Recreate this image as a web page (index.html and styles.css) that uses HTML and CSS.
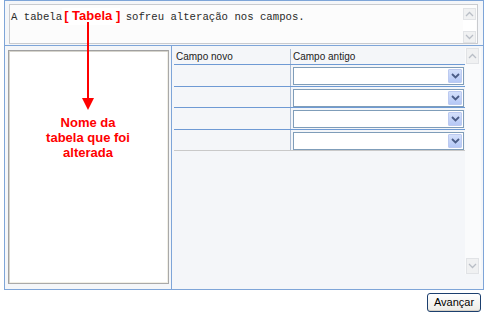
FILE: index.html
```html
<!DOCTYPE html>
<html lang="pt">
<head>
<meta charset="utf-8">
<title>Alteração de tabela</title>
<link rel="stylesheet" href="styles.css">
</head>
<body>
<div class="frame">
  <div class="top">
    <div class="textarea">
      <div class="msg">A tabela<span class="tag">[ Tabela ]</span> sofreu alteração nos campos.</div>
      <div class="tscroll">
        <div class="sbtn"><svg width="9" height="6" viewBox="0 0 9 6"><path d="M1 5 L4.5 1.5 L8 5" fill="none" stroke="#b9bec6" stroke-width="1.3"/></svg></div>
        <div class="strack"></div>
        <div class="sbtn"><svg width="9" height="6" viewBox="0 0 9 6"><path d="M1 1 L4.5 4.5 L8 1" fill="none" stroke="#b9bec6" stroke-width="1.3"/></svg></div>
      </div>
    </div>
  </div>
  <div class="main">
    <div class="left">
      <div class="listbox"></div>
    </div>
    <div class="right">
      <div class="grid">
        <div class="row head">
          <div class="c1">Campo novo</div>
          <div class="c2">Campo antigo</div>
        </div>
        <div class="row">
          <div class="c1"></div>
          <div class="c2"><div class="select"><div class="field"></div><div class="drop"><svg width="9" height="6" viewBox="0 0 9 6"><path d="M1 1 L4.5 4.5 L8 1" fill="none" stroke="#4b5d87" stroke-width="1.8"/></svg></div></div></div>
        </div>
        <div class="row">
          <div class="c1"></div>
          <div class="c2"><div class="select"><div class="field"></div><div class="drop"><svg width="9" height="6" viewBox="0 0 9 6"><path d="M1 1 L4.5 4.5 L8 1" fill="none" stroke="#4b5d87" stroke-width="1.8"/></svg></div></div></div>
        </div>
        <div class="row">
          <div class="c1"></div>
          <div class="c2"><div class="select"><div class="field"></div><div class="drop"><svg width="9" height="6" viewBox="0 0 9 6"><path d="M1 1 L4.5 4.5 L8 1" fill="none" stroke="#4b5d87" stroke-width="1.8"/></svg></div></div></div>
        </div>
        <div class="row last">
          <div class="c1"></div>
          <div class="c2"><div class="select"><div class="field"></div><div class="drop"><svg width="9" height="6" viewBox="0 0 9 6"><path d="M1 1 L4.5 4.5 L8 1" fill="none" stroke="#4b5d87" stroke-width="1.8"/></svg></div></div></div>
        </div>
      </div>
      <div class="rscroll">
        <div class="rbtn"><svg width="9" height="6" viewBox="0 0 9 6"><path d="M1 5 L4.5 1.5 L8 5" fill="none" stroke="#b9bec6" stroke-width="1.3"/></svg></div>
        <div class="rtrack"></div>
        <div class="rbtn"><svg width="9" height="6" viewBox="0 0 9 6"><path d="M1 1 L4.5 4.5 L8 1" fill="none" stroke="#b9bec6" stroke-width="1.3"/></svg></div>
      </div>
    </div>
  </div>
</div>
<div class="footer">
  <button class="btn" type="button">Avançar</button>
</div>
<div class="annot">
  <svg class="arrow" width="100" height="93" viewBox="0 0 100 93">
    <line x1="50" y1="0" x2="50" y2="78" stroke="#ff0000" stroke-width="2"/>
    <polygon points="44,76 56,76 50,88" fill="#ff0000"/>
  </svg>
  <div class="note">Nome da<br>tabela que foi<br>alterada</div>
</div>
</body>
</html>
```

FILE: styles.css
```css
html, body {
  margin: 0;
  padding: 0;
  background: #ffffff;
}
body {
  position: relative;
  width: 486px;
  height: 313px;
  overflow: hidden;
  font-family: "Liberation Sans", Arial, sans-serif;
}
.frame {
  margin-left: 4px;
  width: 478px;
  height: 288px;
  border: 1px solid #7ea5d8;
  display: flex;
  flex-direction: column;
}
.top {
  height: 45px;
  box-sizing: border-box;
  padding: 3px 5px 1px 4px;
  border-bottom: 1px solid #7ea5d8;
  background: #f4f6f9;
}
.textarea {
  height: 40px;
  box-sizing: border-box;
  border: 1px solid #c9cbcf;
  background: #fcfcfc;
  display: flex;
}
.msg {
  flex: 1;
  padding: 3px 0 0 1px;
  font-family: "Liberation Mono", "Courier New", monospace;
  font-size: 10.67px;
  line-height: 14px;
  color: #2a2a2a;
  white-space: nowrap;
}
.tag {
  display: inline-block;
  font-family: "Liberation Sans", Arial, sans-serif;
  font-weight: bold;
  font-size: 13px;
  line-height: 16px;
  padding: 0 0 1px 2px;
  margin-right: -1px;
  background: #ffffff;
  color: #ff0000;
}
.tscroll {
  width: 13px;
  margin-right: 1px;
  padding: 3px 0 0 0;
  display: flex;
  flex-direction: column;
}
.sbtn {
  height: 12px;
  box-sizing: border-box;
  border: 1px solid #e1e3e6;
  background: #f0f1f2;
  display: flex;
  align-items: center;
  justify-content: center;
}
.strack {
  flex: 1;
  background: #ffffff;
}
.main {
  flex: 1;
  display: flex;
}
.left {
  width: 167px;
  box-sizing: border-box;
  padding: 4px 2px 5px 3px;
  border-right: 1px solid #7ea5d8;
  background: #f4f6f9;
  display: flex;
}
.listbox {
  flex: 1;
  box-sizing: border-box;
  border-style: solid;
  border-width: 1px;
  border-color: #a0a0a0 #a9a9a9 #a9a9a9 #a0a0a0;
  box-shadow: inset 1px 1px 0 #d6d4cc, inset -1px -1px 0 #f1efe6;
  background: #ffffff;
}
.right {
  flex: 1;
  background: #f4f6f9;
  display: flex;
  padding: 2px 1px 15px 2px;
}
.grid {
  width: 291px;
  align-self: flex-start;
  padding-top: 1px;
}
.row {
  display: flex;
  height: 21.5px;
  box-sizing: border-box;
  border-bottom: 1px solid #6e9ad4;
}
.row.head {
  height: 16px;
}
.row.last {
  border-bottom: 1px solid #c9c9c9;
}
.c1 {
  width: 117px;
  border-right: 1px solid #a7b9d2;
  padding-left: 2px;
  box-sizing: border-box;
  font-size: 10px;
  line-height: 15px;
  color: #222222;
}
.c2 {
  flex: 1;
  padding-left: 2px;
  font-size: 10px;
  line-height: 15px;
  color: #222222;
  padding-top: 2px;
  box-sizing: border-box;
}
.row.head .c2 {
  padding-top: 0;
}
.select {
  width: 171px;
  height: 18px;
  box-sizing: border-box;
  border: 1px solid #7f9db9;
  background: #ffffff;
  display: flex;
  padding: 1px;
}
.field {
  flex: 1;
}
.drop {
  width: 14px;
  box-sizing: border-box;
  border: 1px solid #bccaf0;
  background: linear-gradient(#d4e0fb, #b5c8f6);
  border-radius: 1px;
  display: flex;
  align-items: center;
  justify-content: center;
}
.rscroll {
  width: 16px;
  display: flex;
  flex-direction: column;
  background: #fafbfc;
}
.rbtn {
  height: 16px;
  box-sizing: border-box;
  margin: 0 2px 0 1px;
  border: 1px solid #e1e3e6;
  background: #f0f1f2;
  display: flex;
  align-items: center;
  justify-content: center;
}
.rtrack {
  flex: 1;
}
.footer {
  display: flex;
  justify-content: flex-end;
  padding: 3px 5px 0 0;
}
.btn {
  width: 54px;
  height: 19px;
  box-sizing: border-box;
  border: 1px solid #1c3f6e;
  border-radius: 3px;
  background: linear-gradient(#ffffff, #ecebe6);
  box-shadow: inset 0 -1px 0 #d6d0c5;
  font-family: "Liberation Sans", Arial, sans-serif;
  font-size: 11px;
  line-height: 15px;
  color: #000000;
  padding: 0;
  margin: 0;
}
.annot {
  position: absolute;
  left: 38px;
  top: 22px;
  width: 100px;
}
.arrow {
  display: block;
}
.note {
  text-align: center;
  font-weight: bold;
  font-size: 13px;
  line-height: 15px;
  color: #ff0000;
}
```
